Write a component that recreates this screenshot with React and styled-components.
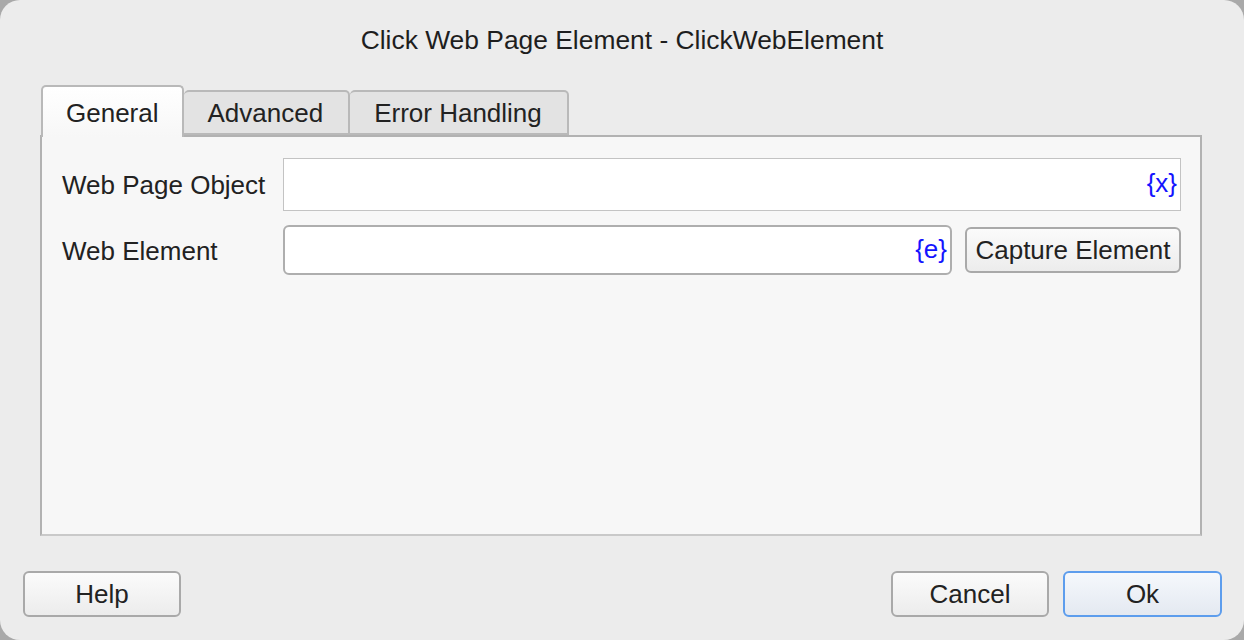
import React from 'react';
import styled, { createGlobalStyle } from 'styled-components';

const GlobalStyle = createGlobalStyle`
  * { box-sizing: border-box; }
  html, body {
    margin: 0;
    padding: 0;
    background: #a9a9a9;
  }
  body {
    font-family: "Liberation Sans", Arial, sans-serif;
    color: #222;
  }
`;

const Window = styled.div`
  width: 1244px;
  height: 640px;
  background: #ececec;
  border-radius: 20px;
  display: flex;
  flex-direction: column;
  overflow: hidden;
`;

const Title = styled.div`
  height: 85px;
  padding-bottom: 5px;
  display: flex;
  align-items: center;
  justify-content: center;
  font-size: 26.4px;
  color: #1e1e1e;
`;

const TabRow = styled.div`
  height: 50px;
  padding-left: 41px;
  display: flex;
  align-items: flex-end;
  position: relative;
  z-index: 2;
`;

const Tab = styled.div`
  height: ${(p) => (p.$active ? '52px' : '45px')};
  margin-bottom: ${(p) => (p.$active ? '-2px' : '0')};
  padding: ${(p) => (p.$active ? '3px 23px 0' : '2px 25px 0 24px')};
  display: flex;
  align-items: center;
  font-size: 26px;
  color: #222;
  border: 2px solid #b9b9b9;
  border-bottom: ${(p) => (p.$active ? 'none' : '2px solid #b9b9b9')};
  border-left-width: ${(p) => (p.$first ? '2px' : '0')};
  border-radius: 5px 5px 0 0;
  background: ${(p) =>
    p.$active ? 'linear-gradient(#ffffff, #f7f7f7)' : '#e3e3e3'};
`;

const Panel = styled.div`
  flex: 1;
  margin: 0 42px 0 40px;
  background: #f7f7f7;
  border: 2px solid #b2b2b2;
  border-bottom-color: #c9c9c9;
  padding: 21px 19px 0 20px;
  display: flex;
  flex-direction: column;
  gap: 14px;
`;

const FieldRow = styled.div`
  display: flex;
  align-items: center;
`;

const Label = styled.div`
  width: 221px;
  flex-shrink: 0;
  font-size: 26px;
  color: #222;
  padding-top: 2px;
`;

const Input = styled.div`
  flex: 1;
  height: ${(p) => (p.$rounded ? '50px' : '53px')};
  background: #fff;
  border: ${(p) => (p.$rounded ? '2px solid #aeaeae' : '1.5px solid #c3c3c3')};
  border-radius: ${(p) => (p.$rounded ? '6px' : '0')};
  display: flex;
  align-items: center;
  justify-content: flex-end;
  padding-right: 3px;
`;

const VarTag = styled.span`
  font-size: 26px;
  color: #1414ff;
  padding-bottom: 2px;
`;

const Button = styled.button`
  height: 46px;
  width: ${(p) => p.$width || 'auto'};
  padding: 0 8px;
  font-family: "Liberation Sans", Arial, sans-serif;
  font-size: 26px;
  color: #222;
  border: 2px solid ${(p) => (p.$primary ? '#5d9ded' : '#a9a9a9')};
  border-radius: 6px;
  background: ${(p) =>
    p.$primary
      ? 'linear-gradient(#f5f8fc, #e4e9f1)'
      : 'linear-gradient(#fbfbfb, #ececec)'};
`;

const CaptureButton = styled(Button)`
  margin-left: 13px;
  width: 216px;
  flex-shrink: 0;
`;

const Footer = styled.div`
  margin-top: 35px;
  padding: 0 22px 23px 23px;
  display: flex;
  align-items: center;
`;

const Spacer = styled.div`
  flex: 1;
`;

const FooterGroup = styled.div`
  display: flex;
  gap: 14px;
`;

export default function App() {
  return (
    <>
      <GlobalStyle />
      <Window>
        <Title>Click Web Page Element - ClickWebElement</Title>
        <TabRow>
          <Tab $active $first>General</Tab>
          <Tab>Advanced</Tab>
          <Tab>Error Handling</Tab>
        </TabRow>
        <Panel>
          <FieldRow>
            <Label>Web Page Object</Label>
            <Input>
              <VarTag>{'{x}'}</VarTag>
            </Input>
          </FieldRow>
          <FieldRow>
            <Label>Web Element</Label>
            <Input $rounded>
              <VarTag>{'{e}'}</VarTag>
            </Input>
            <CaptureButton>Capture Element</CaptureButton>
          </FieldRow>
        </Panel>
        <Footer>
          <Button $width="158px">Help</Button>
          <Spacer />
          <FooterGroup>
            <Button $width="158px">Cancel</Button>
            <Button $width="159px" $primary>Ok</Button>
          </FooterGroup>
        </Footer>
      </Window>
    </>
  );
}
